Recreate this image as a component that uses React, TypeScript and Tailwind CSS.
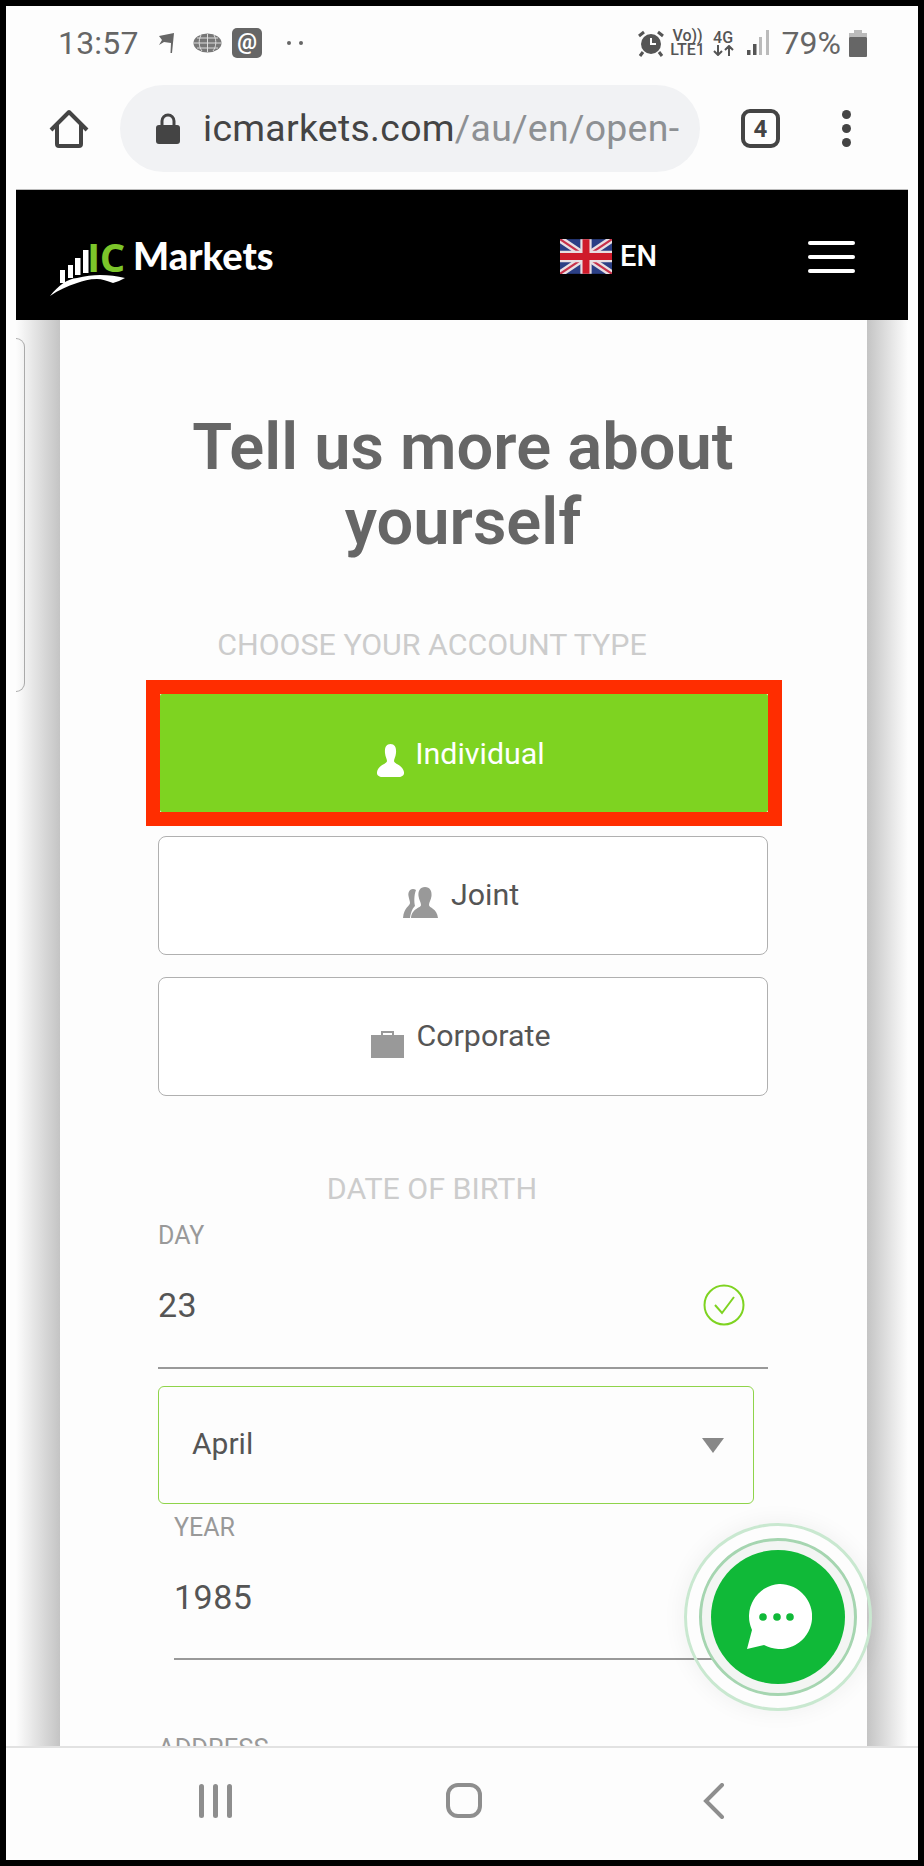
const roboto = "font-['Roboto',sans-serif]";

function StatusBar() {
  return (
    <div className="h-[70px] flex items-center pt-[4px] pl-[52px] pr-[51px] text-[#666]">
      <span className="text-[32px] leading-none tracking-[0.2px] w-[100px]">13:57</span>
      <svg width="18" height="20" viewBox="0 0 18 20" className="mr-[17px]">
        <path d="M1 3 L16 0 L14 20 L12.5 20 L13 10 L6 9 L1 12 L4 7 Z" fill="#666" />
      </svg>
      <svg width="29" height="20" viewBox="0 0 29 20" className="mr-[10px]">
        <ellipse cx="14.5" cy="10" rx="14" ry="9.5" fill="#777" />
        <path d="M1 10 H28 M4 5 H25 M4 15 H25 M14.5 1 V19 M8 2 C5 8 6 14 9 18 M21 2 C24 8 23 14 20 18" stroke="#ddd" strokeWidth="1" fill="none" />
      </svg>
      <div className="w-[30px] h-[30px] rounded-[5px] bg-[#666] flex items-center justify-center text-white text-[22px] font-bold leading-none pb-[2px]">
        @
      </div>
      <div className="flex gap-[8px] ml-[25px]">
        <div className="w-[4px] h-[4px] rounded-full bg-[#666]" />
        <div className="w-[4px] h-[4px] rounded-full bg-[#666]" />
      </div>
      <div className="flex-1" />
      <svg width="28" height="27" viewBox="0 0 26 27" className="mr-[5px]">
        <circle cx="13" cy="14" r="10" fill="#555" />
        <path d="M13 8 V14 H18" stroke="#fff" strokeWidth="2" fill="none" />
        <path d="M1 6 L6 2 M25 6 L20 2 M5 22 L2 26 M21 22 L24 26" stroke="#555" strokeWidth="3" />
      </svg>
      <div className="w-[36px] text-[16px] leading-[14px] font-medium text-[#555] text-center mr-[7px]">
        <div>Vo))</div>
        <div>LTE1</div>
      </div>
      <div className="w-[21px] text-[16px] leading-[14px] font-medium text-[#555] text-center mr-[13px]">
        <div>4G</div>
        <svg width="21" height="11" viewBox="0 0 21 11">
          <path d="M5 0 V9 M1 6 L5 10 L9 6 M16 11 V2 M12 5 L16 1 L20 5" stroke="#555" strokeWidth="2" fill="none" />
        </svg>
      </div>
      <svg width="23" height="26" viewBox="0 0 23 26" className="mr-[12px]">
        <rect x="0" y="20" width="3.5" height="5" fill="#555" />
        <rect x="6" y="14" width="3.5" height="11" fill="#555" />
        <rect x="12" y="7" width="3" height="18" fill="#bbb" />
        <rect x="19" y="0" width="3" height="25" fill="#bbb" />
      </svg>
      <span className="text-[32px] leading-none mr-[8px]">79%</span>
      <svg width="18" height="27" viewBox="0 0 18 27">
        <rect x="5" y="0" width="8" height="4" fill="#bbb" />
        <rect x="0" y="3" width="18" height="4" fill="#bbb" />
        <rect x="0" y="7" width="18" height="20" rx="1" fill="#666" />
      </svg>
    </div>
  );
}

function UrlBar() {
  return (
    <div className="h-[113px] flex items-center pl-[43px] pb-[8px]">
      <svg width="40" height="39" viewBox="0 0 40 39" className="mr-[31px]">
        <path d="M2 21 L20 3 L38 21 M8 16 V35 Q8 37 10 37 H30 Q32 37 32 35 V16" stroke="#444" strokeWidth="4" fill="none" strokeLinejoin="round" />
      </svg>
      <div className="w-[580px] h-[87px] rounded-full bg-[#f1f2f4] flex items-center pl-[36px] overflow-hidden">
        <svg width="24" height="31" viewBox="0 0 24 31" className="mr-[23px] shrink-0">
          <path d="M6 13 V8 A6 6 0 0 1 18 8 V13" stroke="#444" strokeWidth="3" fill="none" />
          <rect x="0" y="12" width="24" height="19" rx="3" fill="#444" />
        </svg>
        <span className="text-[37.400px] leading-none whitespace-nowrap text-[#444] tracking-[0.3px]">
          icmarkets.com<span className="text-[#8d9093]">/au/en/open-</span>
        </span>
      </div>
      <div className="ml-[41px] w-[39px] h-[39px] rounded-[9px] border-[4px] border-[#444] flex items-center justify-center text-[24px] font-bold text-[#444] leading-none">
        4
      </div>
      <div className="ml-[62px] flex flex-col gap-[5px]">
        <div className="w-[9px] h-[9px] rounded-full bg-[#444]" />
        <div className="w-[9px] h-[9px] rounded-full bg-[#444]" />
        <div className="w-[9px] h-[9px] rounded-full bg-[#444]" />
      </div>
    </div>
  );
}

function SiteHeader() {
  return (
    <div className="mx-[10px] h-[131px] bg-black border-t border-[#bbb] flex items-center relative">
      <svg width="80" height="66" viewBox="0 0 80 66" className="absolute left-[33px] top-[43px]">
        <rect x="11" y="37" width="5" height="13" fill="#fff" />
        <rect x="19" y="32" width="5" height="13" fill="#fff" />
        <rect x="26" y="25" width="5.500" height="17" fill="#fff" />
        <rect x="34" y="17" width="5.500" height="23" fill="#fff" />
        <path d="M1 63 C10 52 18 46 28 45 C36 43 44 42 51 42 C60 42 68 43 76 45 C72 47 68 49 64 50 C58 48 53 46 48 46 C40 46 34 48 28 50 C18 53 10 57 1 63 Z" fill="#fff" />
      </svg>
      <span className="absolute left-[71px] top-[45px] text-[40px] leading-[44px] font-bold text-[#7cc62a] tracking-[-0.5px] font-['Open_Sans',sans-serif]">
        IC
      </span>
      <span className="absolute left-[117px] top-[43px] text-[38px] leading-[44px] font-black text-white font-['Lato',sans-serif]">
        Markets
      </span>
      <svg width="52" height="35" viewBox="0 0 60 40" className="absolute left-[544px] top-[49px]">
        <rect width="60" height="40" fill="#2b3f85" />
        <path d="M0 0 L60 40 M60 0 L0 40" stroke="#e8dfe2" strokeWidth="8" />
        <path d="M0 0 L60 40 M60 0 L0 40" stroke="#c8324a" strokeWidth="2.5" />
        <path d="M30 0 V40 M0 20 H60" stroke="#e8dfe2" strokeWidth="13" />
        <path d="M30 0 V40 M0 20 H60" stroke="#cf1b2b" strokeWidth="8" />
      </svg>
      <span className="absolute left-[604px] top-[48px] text-[29px] leading-[36px] font-medium text-white">EN</span>
      <div className="absolute left-[792px] top-[51px] flex flex-col gap-[10px]">
        <div className="w-[47px] h-[4px] rounded-full bg-white" />
        <div className="w-[47px] h-[4px] rounded-full bg-white" />
        <div className="w-[47px] h-[4px] rounded-full bg-white" />
      </div>
    </div>
  );
}

function PersonIcon({ color }: { color: string }) {
  return (
    <svg width="27" height="33" viewBox="0 0 27 33">
      <path
        d="M13.5 0 C9 0 7.5 4 8 9 C8.4 13 10 15 10 17 C10 20 1 21 0 28 C-0.5 32 3 33 6 33 H21 C24 33 27.500 32 27 28 C26 21 17 20 17 17 C17 15 18.600 13 19 9 C19.500 4 18 0 13.500 0 Z"
        fill={color}
      />
    </svg>
  );
}

function JointIcon({ color }: { color: string }) {
  return (
    <svg width="35" height="31" viewBox="0 0 35 31">
      <path d="M10 2 C6 2 5 6 5.500 9 C6 12 7 14 7 16 C7 19 1 20 0 31 H7 C8 24 10 21 12 19 C11 15 11 8 13 3 C12 2.300 11 2 10 2 Z" fill={color} />
      <path d="M22 0 C17 0 15 4 15.500 9 C16 13 18 15 18 18 C18 21 9 21 8 31 H35 C34 21 26 21 26 18 C26 15 28 13 28.500 9 C29 4 27 0 22 0 Z" fill={color} />
    </svg>
  );
}

function BriefcaseIcon({ color }: { color: string }) {
  return (
    <svg width="33" height="28" viewBox="0 0 33 28">
      <path d="M11 6 V2 H22 V6" stroke={color} strokeWidth="2" fill="none" />
      <rect x="0" y="5" width="33" height="23" fill={color} />
    </svg>
  );
}

function AccountButton({ label, icon, gap }: { label: string; icon: React.ReactNode; gap: string }) {
  return (
    <div className={`h-[119px] w-[610px] rounded-[8px] border border-[#b0b0b0] bg-white flex items-center justify-center pr-[4px] text-[#555] text-[30.400px] ${gap}`}>
      <div className="mt-[14px]">{icon}</div>
      <span className="leading-none">{label}</span>
    </div>
  );
}

function AccountTypes() {
  return (
    <div className="flex flex-col">
      {/* red marker drawn over the screenshot */}
      <div className="-ml-[12px] mt-[18px] w-[636px] h-[146px] border-[14px] border-[#ff2d00]">
        <div className="h-full bg-[#7ed321] rounded-[2px] flex items-center justify-center gap-[11px] pr-[6px] text-white text-[30.400px]">
          <div className="mt-[14px]">
            <PersonIcon color="#fff" />
          </div>
          <span className="leading-none mb-[-2px]">Individual</span>
        </div>
      </div>
      <div className="mt-[10px]">
        <AccountButton label="Joint" icon={<JointIcon color="#999" />} gap="gap-[13px]" />
      </div>
      <div className="mt-[22px]">
        <AccountButton label="Corporate" icon={<BriefcaseIcon color="#999" />} gap="gap-[12px]" />
      </div>
    </div>
  );
}

function FormCard() {
  return (
    <div className="w-[807px] h-full bg-[#fdfdfd] pl-[98px] flow-root">
      <h1 className="w-[610px] mt-[90px] text-center text-[65px] leading-[75px] font-semibold text-[#666]">
        Tell us more about yourself
      </h1>
      <div className="w-[548px] mt-[68px] text-center text-[30.400px] leading-[34px] text-[#ccc] whitespace-nowrap">
        CHOOSE YOUR ACCOUNT TYPE
      </div>
      <AccountTypes />
      <div className="w-[548px] mt-[76px] text-center text-[30.400px] leading-[34px] text-[#ccc]">DATE OF BIRTH</div>
      <div className="mt-[16px] text-[25px] leading-[28px] text-[#999]">DAY</div>
      <div className="w-[610px] h-[119px] border-b-2 border-[#999] flex items-center justify-between pr-[23px] pb-[7px]">
        <span className="text-[34px] leading-none text-[#555] tracking-[0.5px]">23</span>
        <svg width="42" height="42" viewBox="0 0 42 42">
          <circle cx="21" cy="21" r="19.500" stroke="#7ed321" strokeWidth="2" fill="none" />
          <path d="M12 21 L19 29 L31 13" stroke="#7ed321" strokeWidth="2" fill="none" />
        </svg>
      </div>
      <div className="mt-[17px] w-[596px] h-[118px] rounded-[6px] border border-[#8fd44a] flex items-center justify-between pl-[33px] pr-[29px]">
        <span className="text-[30px] leading-none text-[#555] mb-[2px]">April</span>
        <div className="w-0 h-0 border-l-[11px] border-r-[11px] border-t-[15px] border-l-transparent border-r-transparent border-t-[#888]" />
      </div>
      <div className="ml-[16px] mt-[10px] text-[25px] leading-[28px] text-[#999]">YEAR</div>
      <div className="ml-[16px] w-[600px] h-[118px] border-b-2 border-[#999] flex items-center pb-[7px]">
        <span className="text-[34px] leading-none text-[#555] tracking-[0.5px]">1985</span>
      </div>
      <div className="mt-[74px] text-[25.500px] leading-[28px] text-[#999]">ADDRESS</div>
    </div>
  );
}

function ChatBubble() {
  return (
    <div className="absolute left-[678px] top-[1517px] w-[188px] h-[188px] rounded-full border-[3px] border-[#c9e8d0] flex items-center justify-center shadow-[0_0_24px_rgba(0,0,0,0.06)]">
      <div className="w-[158px] h-[158px] rounded-full border-[3px] border-[#a5d5b0] bg-[#f3f5f3] flex items-center justify-center">
        <div className="w-[134px] h-[134px] rounded-full bg-[#10b938] flex items-center justify-center">
          <svg width="68" height="66" viewBox="0 0 68 66">
            <path d="M35 0 A32.500 32.500 0 1 1 20 61 L3 65 L8 46 A32.500 32.500 0 0 1 35 0 Z" fill="#fff" />
            <circle cx="19" cy="33" r="3.800" fill="#10b938" />
            <circle cx="33" cy="33" r="3.800" fill="#10b938" />
            <circle cx="46" cy="33" r="3.800" fill="#10b938" />
          </svg>
        </div>
      </div>
    </div>
  );
}

function NavBar() {
  return (
    <div className="h-[114px] border-t-2 border-[#e2e2e2] relative">
      <div className="absolute left-[193px] top-[36px] flex gap-[9.500px]">
        <div className="w-[4.500px] h-[34px] rounded-full bg-[#8e8e8e]" />
        <div className="w-[4.500px] h-[34px] rounded-full bg-[#8e8e8e]" />
        <div className="w-[4.500px] h-[34px] rounded-full bg-[#8e8e8e]" />
      </div>
      <div className="absolute left-[440px] top-[35px] w-[36px] h-[35px] rounded-[12px] border-[4px] border-[#8e8e8e]" />
      <svg width="22" height="36" viewBox="0 0 22 36" className="absolute left-[697px] top-[35px]">
        <path d="M19 2 L3 18 L19 34" stroke="#8e8e8e" strokeWidth="4" fill="none" strokeLinecap="round" />
      </svg>
    </div>
  );
}

export default function App() {
  return (
    <div className={`w-[924px] h-[1866px] bg-black p-[6px] ${roboto}`}>
      <div className="relative w-[912px] h-[1854px] bg-[#fdfdfd] overflow-hidden">
        <StatusBar />
        <UrlBar />
        <SiteHeader />
        <div className="mx-[10px] h-[1426px] flex overflow-hidden relative">
          <div className="w-[44px] h-full bg-gradient-to-r from-[#fdfdfd] to-[#c4c4c4] relative">
            <div className="absolute left-0 top-[18px] w-[9px] h-[354px] rounded-r-[10px] border border-l-0 border-[#aaa]" />
          </div>
          <FormCard />
          <div className="w-[41px] h-full bg-gradient-to-r from-[#c4c4c4] to-[#fdfdfd]" />
        </div>
        <NavBar />
        <ChatBubble />
      </div>
    </div>
  );
}
